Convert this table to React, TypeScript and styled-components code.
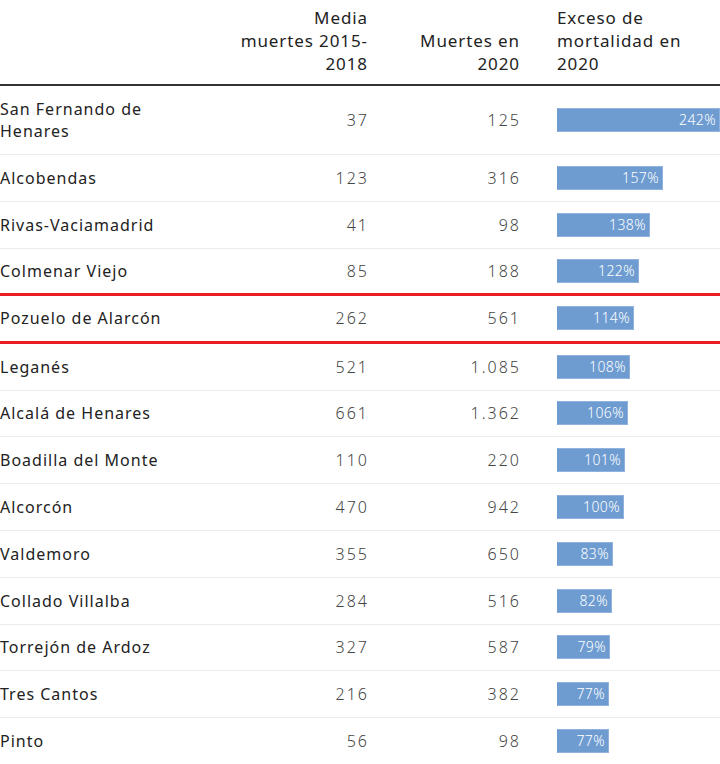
import React from 'react'
import styled, { createGlobalStyle } from 'styled-components'

const GlobalStyle = createGlobalStyle`
  html, body {
    margin: 0;
    padding: 0;
    background: #ffffff;
  }
  body {
    font-family: 'Noto Sans', 'Open Sans', sans-serif;
    color: #222;
  }
`

interface RowData {
  name: string;
  avg: string;
  deaths: string;
  excess: number;
}

const data: RowData[] = [
  { name: 'San Fernando de Henares', avg: '37', deaths: '125', excess: 242 },
  { name: 'Alcobendas', avg: '123', deaths: '316', excess: 157 },
  { name: 'Rivas-Vaciamadrid', avg: '41', deaths: '98', excess: 138 },
  { name: 'Colmenar Viejo', avg: '85', deaths: '188', excess: 122 },
  { name: 'Pozuelo de Alarcón', avg: '262', deaths: '561', excess: 114 },
  { name: 'Leganés', avg: '521', deaths: '1.085', excess: 108 },
  { name: 'Alcalá de Henares', avg: '661', deaths: '1.362', excess: 106 },
  { name: 'Boadilla del Monte', avg: '110', deaths: '220', excess: 101 },
  { name: 'Alcorcón', avg: '470', deaths: '942', excess: 100 },
  { name: 'Valdemoro', avg: '355', deaths: '650', excess: 83 },
  { name: 'Collado Villalba', avg: '284', deaths: '516', excess: 82 },
  { name: 'Torrejón de Ardoz', avg: '327', deaths: '587', excess: 79 },
  { name: 'Tres Cantos', avg: '216', deaths: '382', excess: 77 },
  { name: 'Pinto', avg: '56', deaths: '98', excess: 77 },
]

const Table = styled.div`
  width: 720px;
`

const Grid = styled.div`
  display: grid;
  grid-template-columns: 230px 137px 152px 201px;
  align-items: center;
`

const Header = styled(Grid)`
  align-items: end;
  padding: 6px 0 9px;
  border-bottom: 2px solid #333;
`

const HeadCell = styled.div<{ $left?: boolean }>`
  font-size: 17px;
  line-height: 23px;
  color: #222;
  letter-spacing: 0.9px;
  text-align: ${(p) => (p.$left ? 'left' : 'right')};
  padding-left: ${(p) => (p.$left ? '38px' : '0')};
  margin-right: ${(p) => (p.$left ? '0' : '-1px')};
`

const Row = styled(Grid)<{ $red?: boolean; $tall?: boolean }>`
  height: ${(p) => (p.$tall ? '68px' : p.$red ? '44.6px' : '45.8px')};
  border-bottom: ${(p) => (p.$red ? '3px solid #ea1c24' : '1px solid #ebebeb')};
  box-sizing: content-box;
`

const Name = styled.div`
  font-size: 16px;
  line-height: 22px;
  color: #222;
  letter-spacing: 1px;
  padding-right: 60px;
`

const Num = styled.div`
  font-size: 16px;
  font-weight: 300;
  color: #444;
  text-align: right;
  letter-spacing: 2px;
  margin-right: -2px;
`

const BarCell = styled.div`
  padding-left: 38px;
`

const Bar = styled.div`
  height: 24px;
  box-sizing: border-box;
  background: #6e9cd1;
  border: 1px solid #8fb3de;
  border-left-color: #6e9cd1;
  color: #fff;
  font-size: 14px;
  font-weight: 300;
  line-height: 22px;
  letter-spacing: 0.4px;
  text-align: right;
  padding-right: 3px;
`

const PX_PER_PCT = 163 / 242

function App() {
  return (
    <Table>
      <GlobalStyle />
      <Header>
        <div />
        <HeadCell>Media<br />muertes 2015-<br />2018</HeadCell>
        <HeadCell>Muertes en<br />2020</HeadCell>
        <HeadCell $left>Exceso de<br />mortalidad en<br />2020</HeadCell>
      </Header>
      {data.map((r, i) => (
        <Row key={r.name} $tall={i === 0} $red={i === 3 || i === 4}>
          <Name>{r.name}</Name>
          <Num>{r.avg}</Num>
          <Num>{r.deaths}</Num>
          <BarCell>
            <Bar style={{ width: Math.round(r.excess * PX_PER_PCT) }}>{r.excess}%</Bar>
          </BarCell>
        </Row>
      ))}
    </Table>
  )
}

export default App
